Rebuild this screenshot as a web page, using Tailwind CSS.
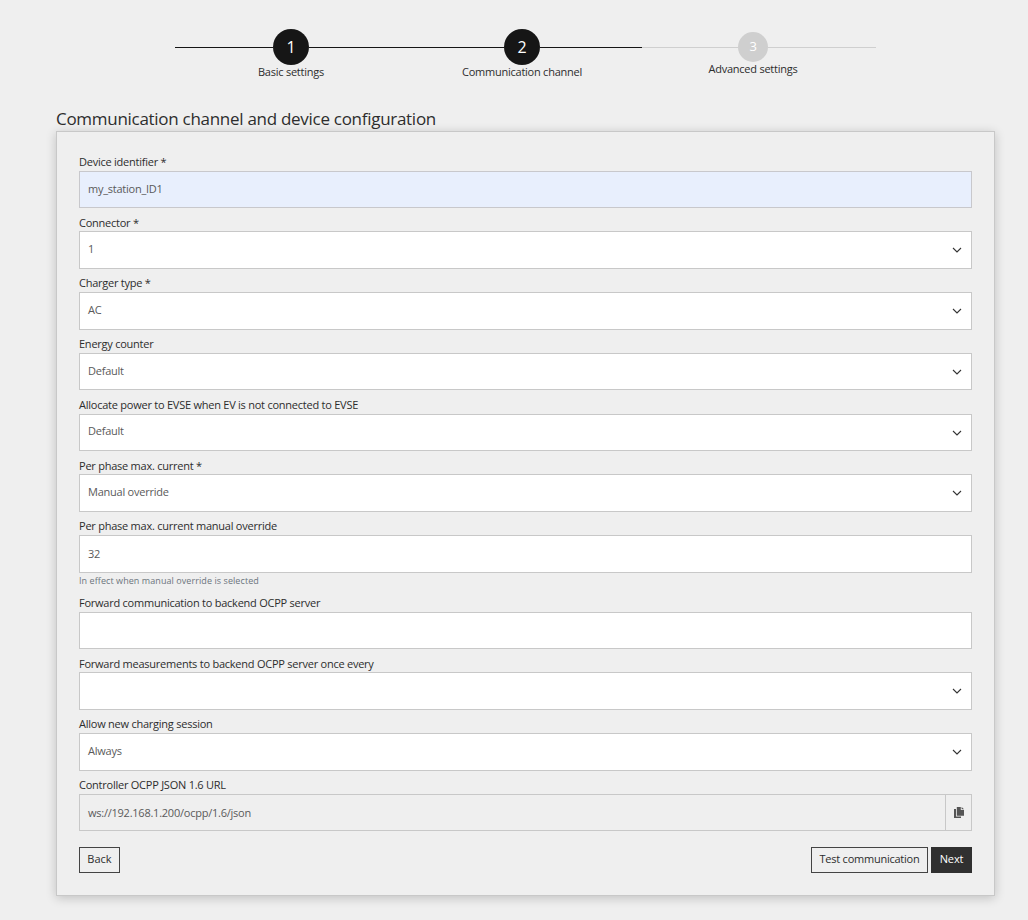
<!DOCTYPE html>
<html lang="en"><head><meta charset="utf-8"><title>Communication channel</title>
<script src="https://cdn.jsdelivr.net/npm/@tailwindcss/browser@4"></script></head>
<body class="h-[920px] overflow-hidden bg-[#efefef] font-['Open_Sans',sans-serif] text-[11px] leading-[17px] tracking-[-0.24px] text-[#2d2d2d]">
<svg class="hidden"><symbol id="chev" viewBox="0 0 10 6"><path d="M1 1l4 4L9 1" fill="none" stroke="#333" stroke-width="1.1"/></symbol></svg>
<nav class="flex pl-[175px] pt-[29px] h-[109px]">
  <div class="flex w-[232px] flex-col items-center">
    <div class="flex h-9 w-full items-center"><i class="h-px flex-1 bg-[#161616]"></i><b class="grid size-9 place-items-center rounded-full bg-[#161616] text-[16px] font-normal text-white">1</b><i class="h-px flex-1 bg-[#161616]"></i></div>
    <span class="-mt-0.5">Basic settings</span>
  </div>
  <div class="flex w-[235px] flex-col">
    <div class="flex h-9 w-full items-center"><i class="h-px w-[97px] bg-[#161616]"></i><b class="grid size-9 place-items-center rounded-full bg-[#161616] text-[16px] font-normal text-white">2</b><i class="h-px flex-1 bg-[#161616]"></i></div>
    <span class="-mt-0.5 w-[230px] text-center">Communication channel</span>
  </div>
  <div class="flex w-[234px] flex-col">
    <div class="flex h-9 w-full items-center"><i class="h-px w-[96px] bg-[#cfcfcf]"></i><b class="grid size-[30px] place-items-center rounded-full bg-[#cfcfcf] pb-px text-[13px] font-normal text-white">3</b><i class="h-px flex-1 bg-[#cfcfcf]"></i></div>
    <span class="-mt-[5px] w-[222px] text-center">Advanced settings</span>
  </div>
</nav>
<h1 class="ml-14 h-[22px] text-[17px] leading-5 tracking-[-0.285px]"><span>Communication channel and device configuration</span></h1>
<main class="ml-14 h-[765px] w-[939px] border border-[#c8c8c8] px-[22px] pt-[21px] shadow-[0_2px_10px_rgba(0,0,0,0.2)]">
  <label class="block"><span class="block h-[18px]"><span>Device identifier *</span></span><span class="flex h-[37px] items-center border border-[#c8c8cc] bg-[#e8effd] px-2 pb-0.5 text-[#5a5a5a]"><span>my_station_ID1</span></span></label>
  <label class="mt-1.5 block"><span class="block h-[17px]"><span>Connector *</span></span><span class="flex h-[38px] items-center justify-between border border-[#c8c8c8] bg-white pl-2 pr-[9px] text-[#5a5a5a]"><span class="-mt-[3px]">1</span><svg class="h-1.5 w-2.5"><use href="#chev"/></svg></span></label>
  <label class="mt-[5px] block"><span class="block h-[18px]"><span>Charger type *</span></span><span class="flex h-[38px] items-center justify-between border border-[#c8c8c8] bg-white pl-2 pr-[9px] text-[#5a5a5a]"><span class="-mt-[3px]">AC</span><svg class="h-1.5 w-2.5"><use href="#chev"/></svg></span></label>
  <label class="mt-[5px] block"><span class="block h-[18px]"><span>Energy counter</span></span><span class="flex h-[37px] items-center justify-between border border-[#c8c8c8] bg-white pl-2 pr-[9px] text-[#5a5a5a]"><span class="-mt-0.5">Default</span><svg class="h-1.5 w-2.5"><use href="#chev"/></svg></span></label>
  <label class="mt-1.5 block"><span class="block h-[18px]"><span>Allocate power to EVSE when EV is not connected to EVSE</span></span><span class="flex h-[37px] items-center justify-between border border-[#c8c8c8] bg-white pl-2 pr-[9px] text-[#5a5a5a]"><span class="-mt-1">Default</span><svg class="h-1.5 w-2.5"><use href="#chev"/></svg></span></label>
  <label class="mt-1.5 block"><span class="block h-[17px]"><span>Per phase max. current *</span></span><span class="flex h-[38px] items-center justify-between border border-[#c8c8c8] bg-white pl-2 pr-[9px] text-[#5a5a5a]"><span class="-mt-[3px]">Manual override</span><svg class="h-1.5 w-2.5"><use href="#chev"/></svg></span></label>
  <label class="mt-[5px] block"><span class="block h-[18px]"><span>Per phase max. current manual override</span></span><span class="flex h-[38px] items-center border border-[#c8c8c8] bg-white px-2 pb-px text-[#5a5a5a]"><span>32</span></span></label>
  <p class="h-4 text-[9px] leading-4 tracking-[0.07px] text-[#6c757d]"><span>In effect when manual override is selected</span></p>
  <label class="mt-[5px] block"><span class="block h-[18px]"><span>Forward communication to backend OCPP server</span></span><span class="block h-[37px] border border-[#c8c8c8] bg-white"></span></label>
  <label class="mt-1.5 block"><span class="block h-[17px]"><span>Forward measurements to backend OCPP server once every</span></span><span class="flex h-[38px] items-center justify-end border border-[#c8c8c8] bg-white pr-[9px]"><svg class="h-1.5 w-2.5"><use href="#chev"/></svg></span></label>
  <label class="mt-[5px] block"><span class="block h-[18px]"><span>Allow new charging session</span></span><span class="flex h-[38px] items-center justify-between border border-[#c8c8c8] bg-white pl-2 pr-[9px] text-[#5a5a5a]"><span class="-mt-[3px]">Always</span><svg class="h-1.5 w-2.5"><use href="#chev"/></svg></span></label>
  <div class="mt-[5px]"><span class="block h-[18px]"><span>Controller OCPP JSON 1.6 URL</span></span>
    <div class="flex h-[37px] border border-[#c8c8c8] text-[#5a5a5a]"><div class="flex flex-1 items-center pl-2"><span>ws://192.168.1.200/ocpp/1.6/json</span></div>
      <div class="grid w-[26px] place-items-center border-l border-[#c8c8c8]"><svg class="h-[11px] w-2.5" viewBox="0 0 10 11" fill="#555"><path d="M0 2h2v7.5h5V11H0z"/><path d="M2.8 0h4v3H10v5.7H2.8z"/><path d="M7.6 0L10 2.3H7.6z"/></svg></div></div></div>
  <div class="mt-4 flex h-[26px] justify-between leading-[22px]">
    <button class="w-[41px] border border-[#444] pb-0.5 tracking-normal"><span>Back</span></button>
    <div class="flex gap-[3px]"><button class="w-[117px] border border-[#444] pb-0.5"><span>Test communication</span></button><button class="w-[41px] bg-[#303030] pb-0.5 font-medium tracking-[-0.1px] text-white"><span>Next</span></button></div>
  </div>
</main>
</body></html>
